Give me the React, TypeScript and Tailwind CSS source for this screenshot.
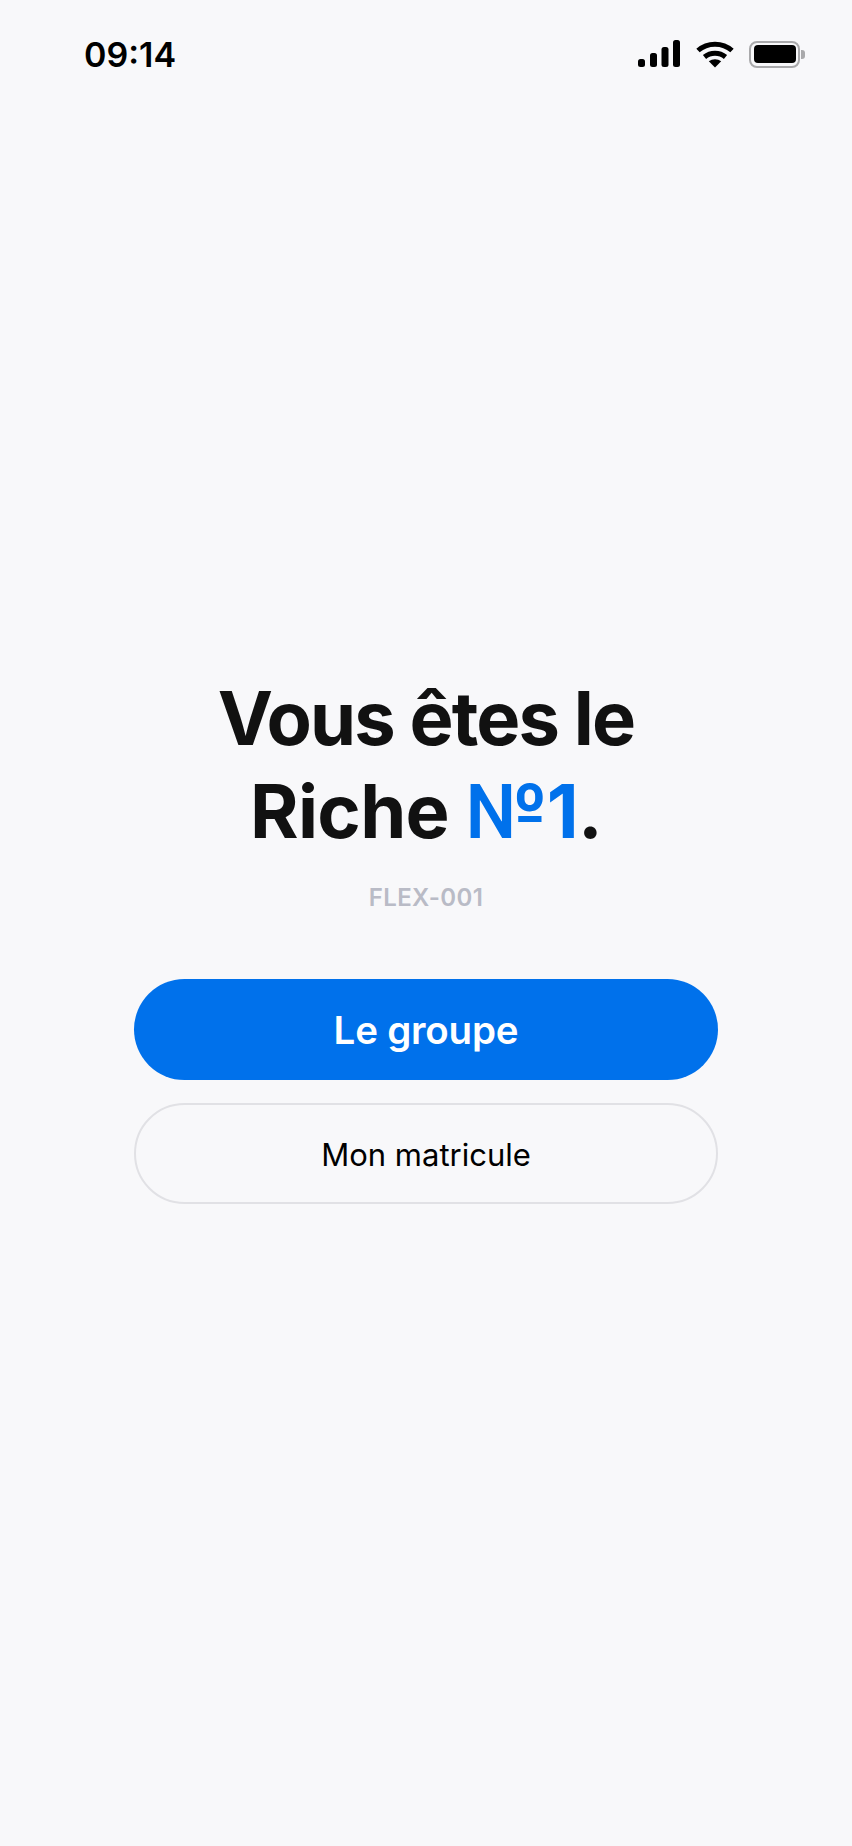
import React from 'react';

function StatusIcons() {
  return (
    <div className="flex items-center mb-[2px]">
      {/* Signal */}
      <svg width="42" height="28" viewBox="0 0 42 28" className="block">
        <rect x="0" y="19" width="7" height="8" rx="2.5" fill="#000" />
        <rect x="12" y="13" width="7" height="14" rx="2.5" fill="#000" />
        <rect x="23.5" y="7" width="7" height="20" rx="2.5" fill="#000" />
        <rect x="35" y="0" width="7" height="27" rx="2.5" fill="#000" />
      </svg>
      {/* Wifi */}
      <svg width="38" height="28" viewBox="0 0 38 28" className="ml-4 block" fill="none">
        <path d="M2 10.5C11.5 2 26.5 2 36 10.5" stroke="#000" strokeWidth="5" strokeLinecap="butt" />
        <path d="M8.5 17C14.5 12 23.5 12 29.5 17" stroke="#000" strokeWidth="5" strokeLinecap="butt" />
        <path d="M12.8 21.3C16.5 18.6 21.5 18.6 25.2 21.3L19 27.6Z" fill="#000" />
      </svg>
      {/* Battery */}
      <div className="ml-[15px] flex items-center">
        <div className="w-[51px] h-[27px] rounded-[8px] border-[2.5px] border-[#a9a9ab] p-[2.5px]">
          <div className="w-full h-full rounded-[4px] bg-black" />
        </div>
        <div className="ml-[1px] w-[4px] h-[9px] rounded-r-[3px] bg-[#a9a9ab]" />
      </div>
    </div>
  );
}

export default function App() {
  return (
    <div
      className="w-[852px] h-[1846px] bg-[#f8f8fa] flex flex-col overflow-hidden"
      style={{ fontFamily: 'Inter, "Liberation Sans", sans-serif' }}
    >
      {/* Status bar */}
      <div className="flex items-center justify-between pt-[40px] pl-[84px] pr-[47px]">
        <span className="text-[34px] leading-[30px] font-semibold text-black">09:14</span>
        <StatusIcons />
      </div>

      {/* Hero */}
      <div className="mt-[602px] flex flex-col items-center">
        <h1 className="text-[74px] leading-[93px] font-bold tracking-[-0.025em] text-[#111111] text-center">
          Vous êtes le
          <br />
          <span className="tracking-[-0.009em]">
            Riche <span className="text-[#0071eb]">№1</span>.
          </span>
        </h1>
        <p className="mt-[25px] text-[24px] leading-[30px] font-semibold tracking-[0.015em] text-[#b9bbc6]">FLEX-001</p>

        <div className="mt-[66px] w-[584px] flex flex-col gap-[23px]">
          <button className="h-[101px] pt-[2px] rounded-full bg-[#0071eb] text-white text-[38.5px] font-semibold tracking-[-0.005em]">
            Le groupe
          </button>
          <button className="h-[101px] pt-[3px] rounded-full border-2 border-[#e1e1e5] text-black text-[31px] font-normal">
            Mon matricule
          </button>
        </div>
      </div>
    </div>
  );
}
